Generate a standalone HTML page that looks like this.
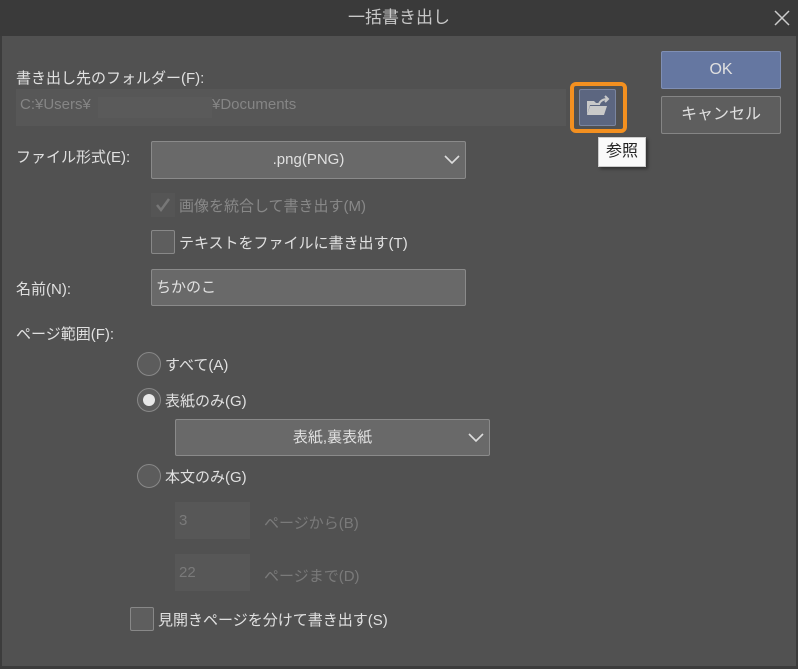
<!DOCTYPE html>
<html><head><meta charset="utf-8"><style>
*{margin:0;padding:0;box-sizing:border-box}
body{width:798px;height:669px;background:#3c3c3c;font-family:"Liberation Sans","Noto Sans CJK JP",sans-serif;color:#e0e0e0;font-size:15px;position:relative;overflow:hidden}
.a{position:absolute;white-space:nowrap}
#title{left:0;top:0;width:798px;height:36px;background:#3a3a3a;text-align:center;line-height:36px;font-size:17px;color:#c8c8c8}
#main{left:2px;top:36px;width:794px;height:630px;background:#515151}
.box{background:#696969;border:1px solid #8a8a8a;border-radius:2px}
.chk{width:24px;height:24px;background:#5e5e5e;border:1px solid #888;border-radius:2px}
.rad{width:24px;height:24px;border-radius:50%;background:#5c5c5c;border:1px solid #888}
.dis{color:#7a7a7a}
</style></head><body>
<div class="a" id="title">一括書き出し</div>
<svg class="a" style="left:774px;top:10px" width="16" height="16"><path d="M1 1l14 14M15 1L1 15" stroke="#ccc" stroke-width="1.5"/></svg>
<div class="a" id="main"></div>
<div class="a" style="left:16px;top:67px">書き出し先のフォルダー(F):</div>
<div class="a" style="left:16px;top:89px;width:550px;height:37px;background:#575757"></div>
<div class="a" style="left:98px;top:97px;width:114px;height:21px;background:#5a5a5a"></div>
<div class="a dis" style="left:20px;top:96px;color:#858585">C:¥Users¥</div>
<div class="a dis" style="left:212px;top:96px;color:#858585">¥Documents</div>
<div class="a" style="left:570px;top:82px;width:57px;height:51px;border:4px solid #f39020;border-radius:6px"></div>
<div class="a" style="left:579px;top:89px;width:37px;height:37px;background:#5c6680;border:1px solid #7a85a0;border-radius:2px"></div>
<svg class="a" style="left:584px;top:94px" width="28" height="26" viewBox="0 0 28 26"><path d="M3 7h7l2 2h4v2H6l-3 10z" fill="#c9c9c9"/><path d="M3 21l3-9h17l-3 9z" fill="#c9c9c9"/><path d="M15 10q2-5 9-5M21 2l3 3-3 3" stroke="#c9c9c9" stroke-width="2" fill="none"/></svg>
<div class="a" style="left:598px;top:137px;width:48px;height:30px;background:#fafafa;border:1px solid #ccc;color:#222;font-size:16px;line-height:28px;text-align:center;box-shadow:2px 2px 3px rgba(0,0,0,.4)">参照</div>
<div class="a" style="left:661px;top:51px;width:120px;height:38px;background:#6577a1;border:1px solid #7f8fb5;border-radius:2px;text-align:center;line-height:36px;font-size:16px">OK</div>
<div class="a" style="left:661px;top:96px;width:120px;height:38px;background:#5e5e5e;border:1px solid #858585;border-radius:2px;text-align:center;line-height:36px;font-size:16px">キャンセル</div>
<div class="a" style="left:16px;top:146px">ファイル形式(E):</div>
<div class="a box" style="left:151px;top:141px;width:315px;height:38px;text-align:center;line-height:36px">.png(PNG)</div>
<svg class="a" style="left:443px;top:154px" width="18" height="12"><path d="M2 2l7 7 7-7" stroke="#ddd" stroke-width="1.6" fill="none"/></svg>
<div class="a" style="left:151px;top:193px;width:24px;height:24px;background:#555"></div>
<svg class="a" style="left:153px;top:195px" width="20" height="20"><path d="M4 10l4 5 8-11" stroke="#777" stroke-width="2.5" fill="none"/></svg>
<div class="a dis" style="left:179px;top:195px;color:#888">画像を統合して書き出す(M)</div>
<div class="a chk" style="left:151px;top:230px"></div>
<div class="a" style="left:179px;top:232px">テキストをファイルに書き出す(T)</div>
<div class="a" style="left:16px;top:278px">名前(N):</div>
<div class="a box" style="left:151px;top:269px;width:315px;height:37px;line-height:35px;padding-left:4px">ちかのこ</div>
<div class="a" style="left:16px;top:323px">ページ範囲(F):</div>
<div class="a rad" style="left:137px;top:352px"></div>
<div class="a" style="left:165px;top:354px">すべて(A)</div>
<div class="a rad" style="left:137px;top:388px"></div>
<div class="a" style="left:143px;top:394px;width:12px;height:12px;border-radius:50%;background:#e8e8e8"></div>
<div class="a" style="left:165px;top:390px">表紙のみ(G)</div>
<div class="a box" style="left:175px;top:419px;width:315px;height:37px;text-align:center;line-height:35px">表紙,裏表紙</div>
<svg class="a" style="left:467px;top:432px" width="18" height="12"><path d="M2 2l7 7 7-7" stroke="#ddd" stroke-width="1.6" fill="none"/></svg>
<div class="a rad" style="left:137px;top:464px"></div>
<div class="a" style="left:165px;top:466px">本文のみ(G)</div>
<div class="a" style="left:175px;top:502px;width:75px;height:37px;background:#575757;color:#7a7a7a;line-height:37px;padding-left:4px">3</div>
<div class="a dis" style="left:264px;top:512px">ページから(B)</div>
<div class="a" style="left:175px;top:554px;width:75px;height:37px;background:#575757;color:#7a7a7a;line-height:37px;padding-left:4px">22</div>
<div class="a dis" style="left:264px;top:565px">ページまで(D)</div>
<div class="a chk" style="left:130px;top:607px"></div>
<div class="a" style="left:158px;top:609px">見開きページを分けて書き出す(S)</div>
</body></html>
